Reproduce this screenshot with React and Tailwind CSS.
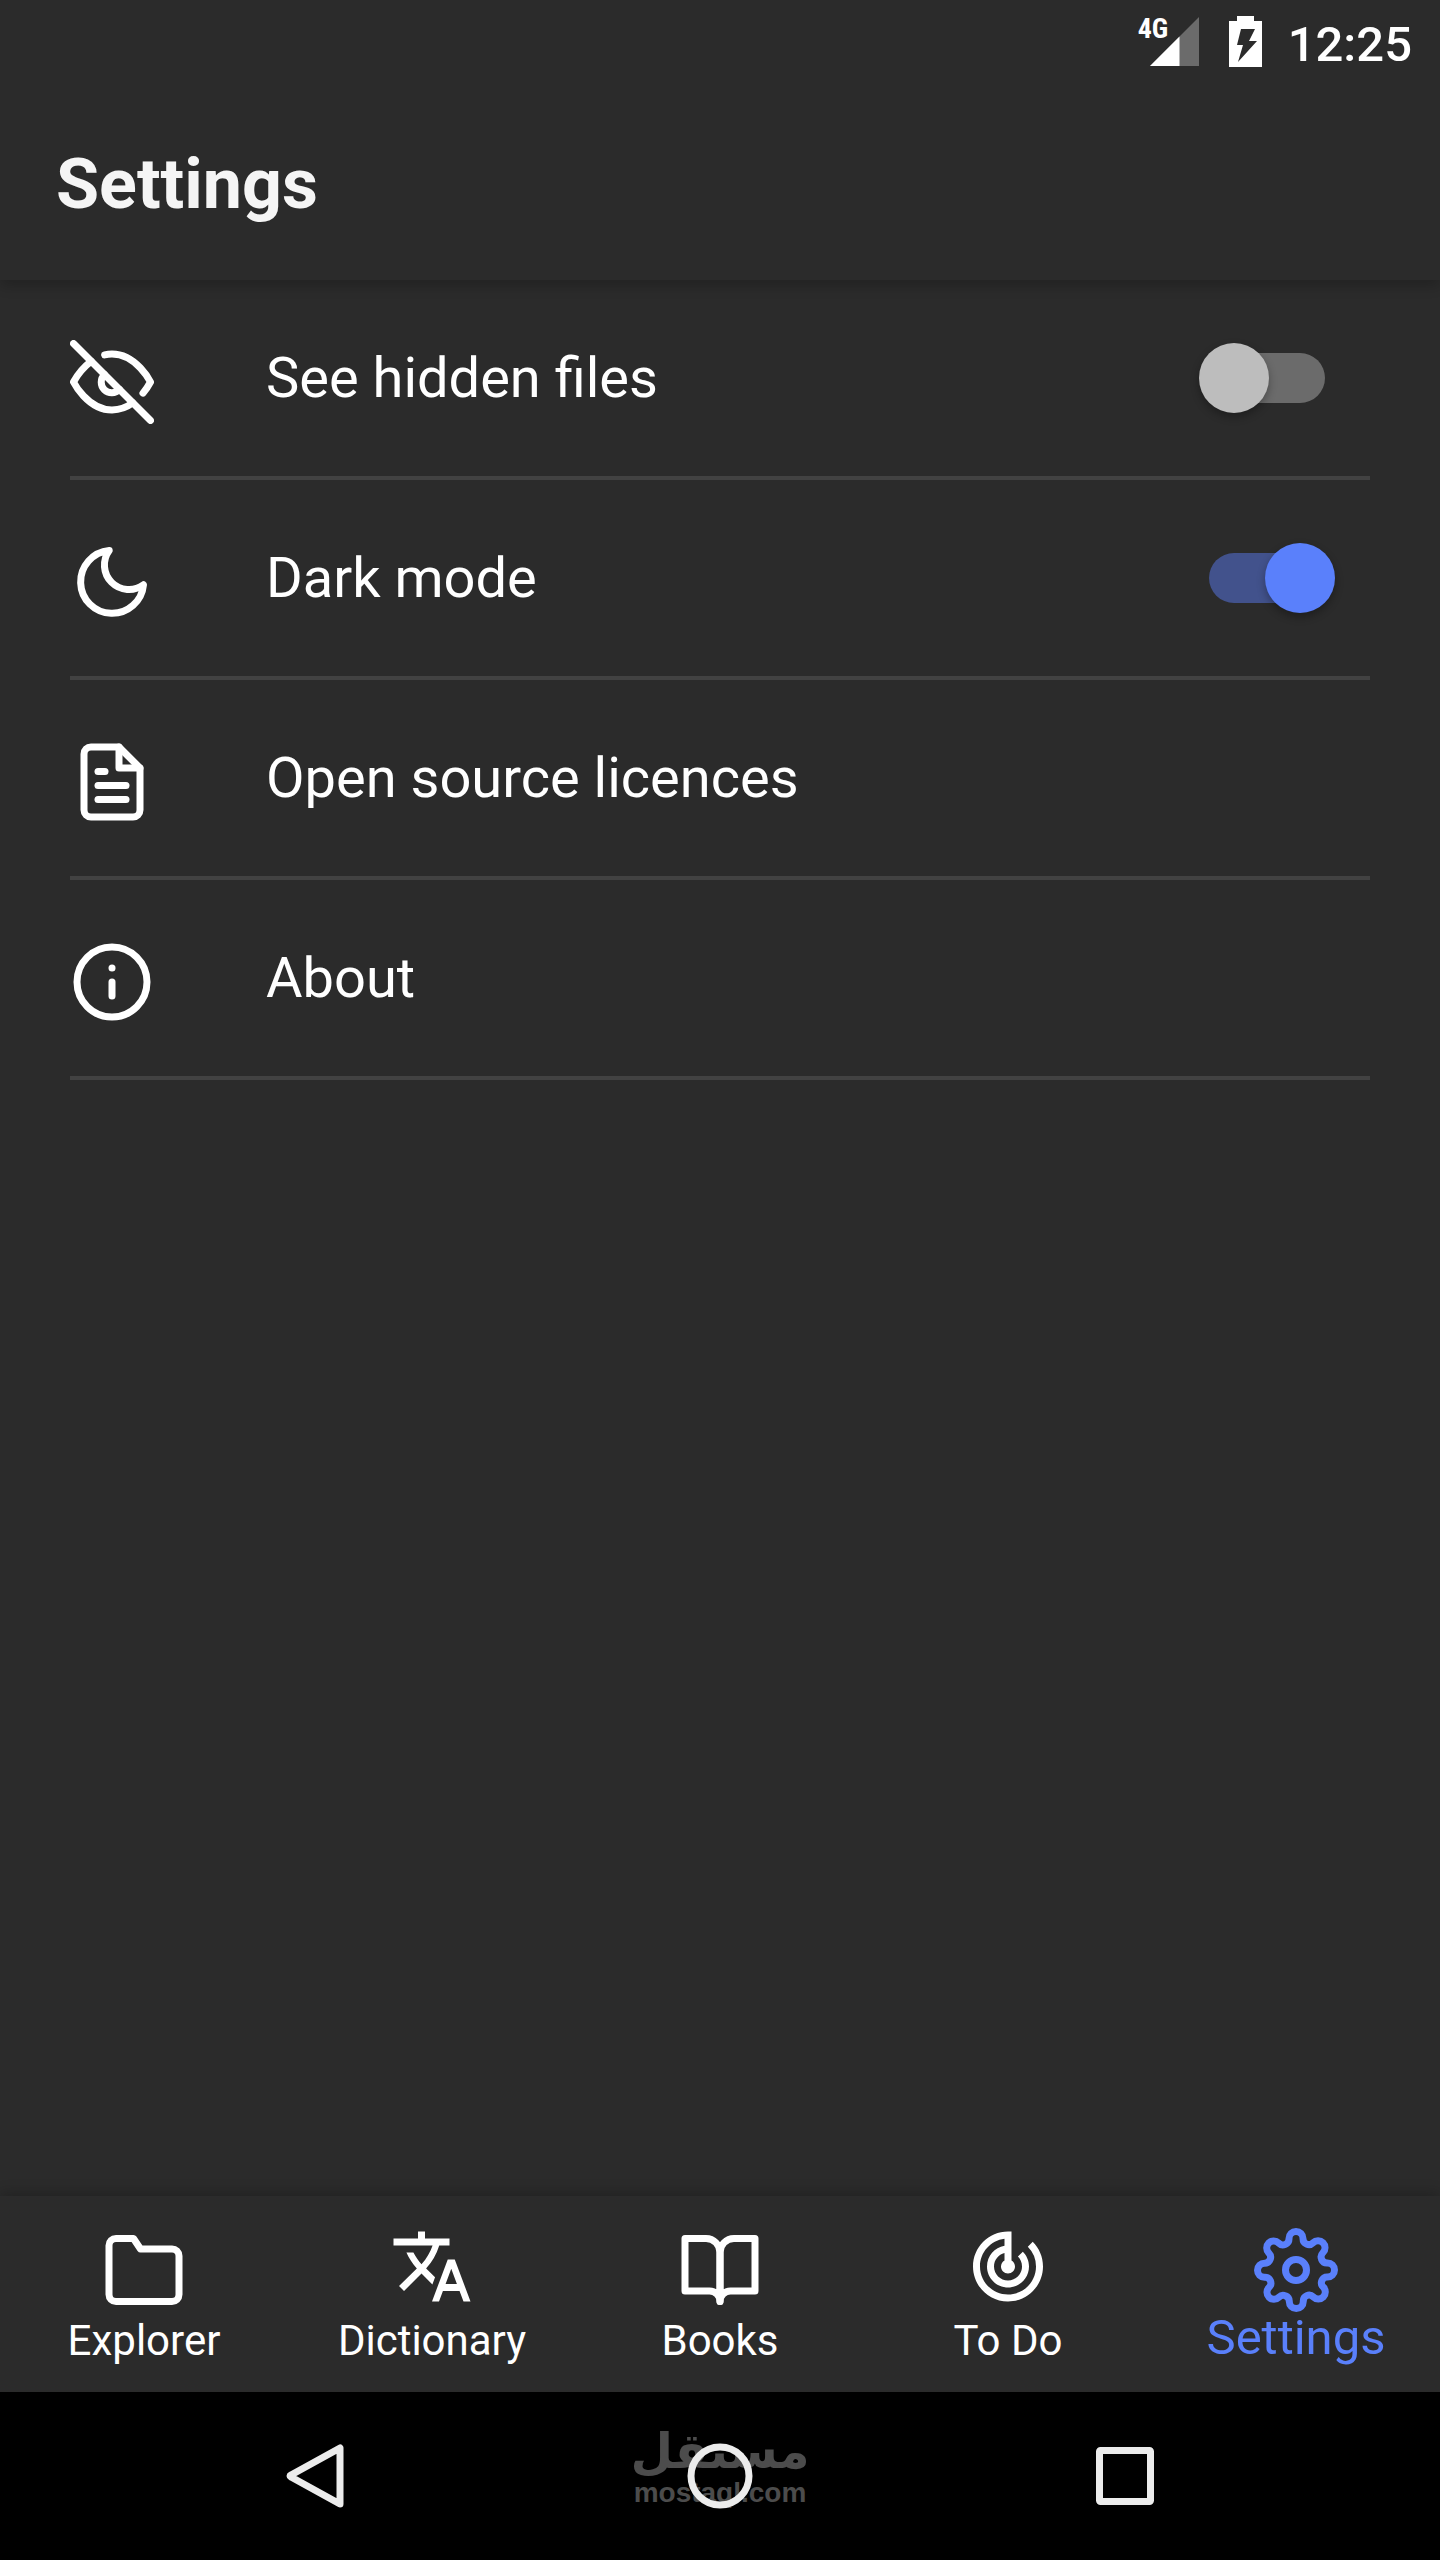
import React, { useState } from 'react'
import { FiBookOpen, FiEyeOff, FiFileText, FiFolder, FiInfo, FiMoon, FiSettings } from 'react-icons/fi'
import { MdTrackChanges, MdTranslate } from 'react-icons/md'

const tabs = [
  { name: 'Explorer', icon: FiFolder },
  { name: 'Dictionary', icon: MdTranslate, viewBox: '0 1 24 24' },
  { name: 'Books', icon: FiBookOpen },
  { name: 'To Do', icon: MdTrackChanges, viewBox: '0 1 24 24' },
  { name: 'Settings', icon: FiSettings },
]

function StatusBar() {
  return (
    <div className="flex h-[84px] items-end justify-end pr-7 pb-[17px] text-white">
      <div className="relative mr-[30px] h-[50px] w-[49px]">
        <svg viewBox="0 0 49 50" className="h-[50px] w-[49px]">
          <path d="M49 0V49H0Z" fill="#6b6b6b" />
          <path d="M29.500 19.500V49H0Z" fill="#fff" />
        </svg>
        <span className="absolute top-0 -left-3 font-['Roboto_Condensed','Roboto',sans-serif] text-[28px] leading-6 font-bold">
          4G
        </span>
      </div>
      <svg viewBox="0 0 33 51" className="mr-[26px] h-[51px] w-[33px]">
        <path d="M8 0H25V5H33V51H0V5H8Z" fill="#fff" />
        <path d="M12 13H26L20 25H28L9 46L14 29H8Z" fill="#2b2b2b" />
      </svg>
      <span className="text-[49px] leading-[45px] font-medium">12:25</span>
    </div>
  )
}

function Row({ icon: Icon, children }) {
  return (
    <li className="flex h-[200px] items-center gap-28 border-b-4 border-[#424242]">
      <Icon size={84} className="mt-2 shrink-0" />
      {children}
    </li>
  )
}

function SwitchRow({ id, icon, label, checked, onChange }) {
  return (
    <Row icon={icon}>
      <label htmlFor={id} className="flex-1">{label}</label>
      <input
        id={id}
        type="checkbox"
        checked={checked}
        onChange={(e) => onChange(e.target.checked)}
        className="relative mr-[45px] h-[50px] w-[116px] shrink-0 appearance-none rounded-full bg-[#6b6b6b] before:absolute before:-top-[10px] before:-left-[10px] before:size-[70px] before:rounded-full before:bg-[#bdbdbd] before:shadow-[0_4px_8px_rgba(0,0,0,0.3)] before:content-[''] checked:bg-[#42528c] checked:before:left-[56px] checked:before:bg-[#5a80fb]"
      />
    </Row>
  )
}

function TabBar({ active, onSelect }) {
  return (
    <nav className="relative flex h-[196px] shadow-[0_-4px_12px_rgba(0,0,0,0.2)]">
      {tabs.map(({ name, icon: Icon, viewBox = '0 0 24 24' }) => (
        <button
          key={name}
          type="button"
          onClick={() => onSelect(name)}
          className={`flex flex-1 flex-col items-center pt-8 ${
            active === name ? 'text-[49px] leading-[52px] text-[#5a80fb]' : 'text-[42px] leading-[57px] text-white'
          }`}
        >
          <Icon size={84} viewBox={viewBox} />
          <span>{name}</span>
        </button>
      ))}
    </nav>
  )
}

function SystemNav() {
  return (
    <div className="relative flex h-[168px] items-center bg-black px-28 text-[#ececec]">
      {/* Watermark */}
      <div className="absolute inset-0 flex flex-col items-center justify-center pb-4 text-[#4c4c4c]">
        <span lang="ar" dir="rtl" className="font-['DejaVu_Sans',sans-serif] text-[49px] leading-[50px] font-bold">
          مستقل
        </span>
        <span className="font-['Liberation_Sans',sans-serif] text-[28px] leading-8 font-bold">mostaql.com</span>
      </div>
      <button type="button" aria-label="Back" className="relative flex flex-1 justify-center">
        <svg viewBox="0 0 58 66" className="h-[66px] w-[58px]" fill="none" stroke="currentColor" strokeWidth="7" strokeLinejoin="round">
          <path d="M54 5V61L5 34Q3 33 5 32Z" />
        </svg>
      </button>
      <button type="button" aria-label="Home" className="relative flex flex-1 justify-center">
        <svg viewBox="0 0 66 66" className="size-[66px]" fill="none" stroke="currentColor" strokeWidth="7">
          <circle cx="33" cy="33" r="29" />
        </svg>
      </button>
      <button type="button" aria-label="Recent apps" className="relative flex flex-1 justify-center">
        <svg viewBox="0 0 58 58" className="size-[58px]" fill="none" stroke="currentColor" strokeWidth="7" strokeLinejoin="round">
          <rect x="3.500" y="3.500" width="51" height="51" rx="1" />
        </svg>
      </button>
    </div>
  )
}

export default function App() {
  const [hiddenFiles, setHiddenFiles] = useState(false)
  const [darkMode, setDarkMode] = useState(true)
  const [tab, setTab] = useState('Settings')

  return (
    <div className="flex min-h-screen flex-col bg-[#2b2b2b] font-['Roboto',sans-serif] text-white">
      <header className="shadow-[0_6px_12px_rgba(0,0,0,0.2)]">
        <StatusBar />
        <div className="flex h-[196px] items-center px-14 pt-1">
          <h1 className="text-[70px] leading-[84px] font-bold text-[#f5f5f5]">Settings</h1>
        </div>
      </header>

      <main className="flex-1 px-[70px]">
        <ul className="text-[56px] leading-[64px]">
          <SwitchRow id="hidden-files" icon={FiEyeOff} label="See hidden files" checked={hiddenFiles} onChange={setHiddenFiles} />
          <SwitchRow id="dark-mode" icon={FiMoon} label="Dark mode" checked={darkMode} onChange={setDarkMode} />
          <Row icon={FiFileText}>
            <a href="#licences" className="flex-1">Open source licences</a>
          </Row>
          <Row icon={FiInfo}>
            <a href="#about" className="flex-1">About</a>
          </Row>
        </ul>
      </main>

      <TabBar active={tab} onSelect={setTab} />
      <SystemNav />
    </div>
  )
}
